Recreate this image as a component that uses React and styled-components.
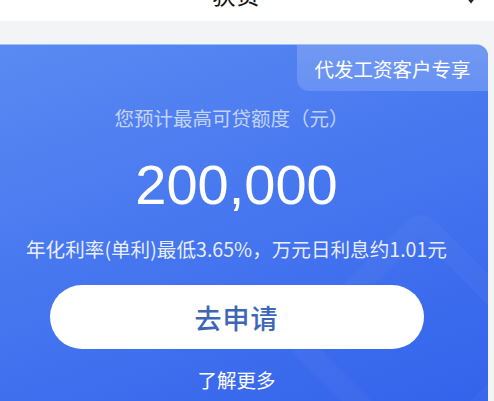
import styled, { createGlobalStyle } from "styled-components";

const GlobalStyle = createGlobalStyle`
  html, body {
    margin: 0;
    padding: 0;
    background: #f3f4f6;
    overflow: hidden;
  }
  body {
    font-family: "Noto Sans CJK SC", "Noto Sans", sans-serif;
  }
`;

export default function App() {
  return (
    <>
      <GlobalStyle />
      <Page>
        <Header>
          <Title>获贷</Title>
          <HeaderIcon viewBox="0 0 24 24" fill="none" stroke="#222" strokeWidth="2">
            <path d="M4 2 L12 12 L20 2" />
          </HeaderIcon>
        </Header>
        <Gap />
        <Card>
          <Badge>代发工资客户专享</Badge>
          <Watermark />
          <Label>您预计最高可贷额度（元）</Label>
          <Amount>200,000</Amount>
          <Rate>年化利率(单利)最低3.65%，万元日利息约1.01元</Rate>
          <ApplyButton>去申请</ApplyButton>
          <MoreLink>了解更多</MoreLink>
        </Card>
      </Page>
    </>
  );
}

const Page = styled.div`
  width: 494px;
  height: 401px;
  overflow: hidden;
  display: flex;
  flex-direction: column;
`;

const Header = styled.div`
  height: 21px;
  background: #ffffff;
  position: relative;
  display: flex;
  justify-content: center;
  overflow: hidden;
`;

const Title = styled.div`
  font-size: 24px;
  line-height: 24px;
  margin-top: -18px;
  margin-right: 22px;
  color: #111;
`;

const HeaderIcon = styled.svg`
  position: absolute;
  right: 12px;
  top: -9px;
  width: 22px;
  height: 22px;
`;

const Gap = styled.div`
  height: 23px;
`;

const Card = styled.div`
  position: relative;
  margin: 0 6px 0 -15px;
  flex: 1;
  border-radius: 12px 12px 0 0;
  border-top: 1px solid #9ec0f7;
  background: linear-gradient(160deg, #5a8af2 0%, #4676ef 50%, #3363eb 100%);
  display: flex;
  flex-direction: column;
  align-items: center;
  overflow: hidden;
`;

const Badge = styled.div`
  position: absolute;
  top: 0;
  right: 0;
  width: 191px;
  height: 46px;
  border-radius: 0 12px 0 12px;
  background: linear-gradient(180deg, #7199f3 0%, #6791f3 100%);
  color: #ffffff;
  font-size: 19.5px;
  display: flex;
  align-items: center;
  justify-content: center;
`;

const Watermark = styled.div`
  position: absolute;
  right: -30px;
  bottom: -40px;
  width: 150px;
  height: 150px;
  transform: rotate(45deg);
  border: 22px solid rgba(255, 255, 255, 0.03);
  border-radius: 20px;
`;

const Label = styled.div`
  margin-top: 60px;
  margin-right: 10px;
  font-size: 19.5px;
  line-height: 26px;
  color: rgba(255, 255, 255, 0.68);
`;

const Amount = styled.div`
  margin-top: 24px;
  font-family: "Liberation Sans", Arial, sans-serif;
  font-size: 56px;
  line-height: 60px;
  color: #ffffff;
`;

const Rate = styled.div`
  margin-top: 21px;
  font-size: 19.6px;
  line-height: 26px;
  color: rgba(255, 255, 255, 0.9);
  white-space: nowrap;
`;

const ApplyButton = styled.button`
  margin-top: 23px;
  width: 374px;
  height: 64px;
  border: none;
  border-radius: 32px;
  background: #ffffff;
  color: #3e66b8;
  font-family: "Noto Sans CJK SC", sans-serif;
  font-size: 27px;
  font-weight: 500;
  letter-spacing: 1px;
  cursor: pointer;
`;

const MoreLink = styled.div`
  margin-top: 18px;
  font-size: 19.5px;
  line-height: 26px;
  color: #ffffff;
`;
